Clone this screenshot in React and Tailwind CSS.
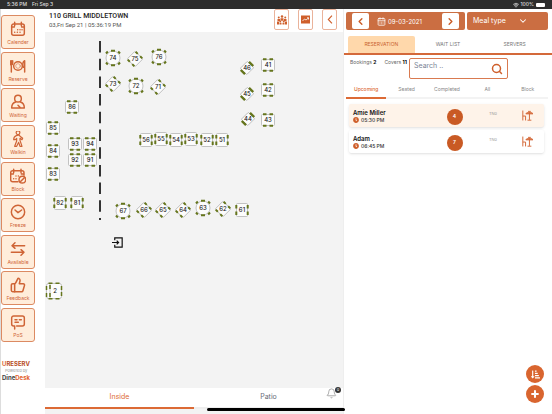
import React from 'react';
import { CalendarDays, ChevronDown, ChevronLeft, ChevronRight, Search, ThumbsUp, Wifi, Bell, Plus } from 'lucide-react';
import { FaClock, FaSortAmountDownAlt } from 'react-icons/fa';

const NAV = ['Calender', 'Reserve', 'Waiting', 'Walkin', 'Block', 'Freeze', 'Available', 'Feedback', 'PoS'];

// x / y are the centre of the table on the floor canvas
const TABLES = [
  { no: 74, shape: 'round', x: 68, y: 26 },
  { no: 75, shape: 'diamond', x: 90, y: 27 },
  { no: 76, shape: 'round', x: 114, y: 25 },
  { no: 73, shape: 'diamond', x: 68, y: 52 },
  { no: 72, shape: 'round', x: 91, y: 54 },
  { no: 71, shape: 'diamond', x: 113, y: 55 },
  { no: 46, shape: 'tilted', x: 202, y: 36 },
  { no: 45, shape: 'tilted', x: 202, y: 62 },
  { no: 44, shape: 'tilted', x: 203, y: 87 },
  { no: 41, shape: 'wide', x: 223, y: 33 },
  { no: 42, shape: 'wide', x: 223, y: 58 },
  { no: 43, shape: 'wide', x: 223, y: 88 },
  { no: 86, shape: 'wide', x: 27, y: 75 },
  { no: 85, shape: 'wide', x: 8, y: 96 },
  { no: 84, shape: 'wide', x: 8, y: 119 },
  { no: 83, shape: 'wide', x: 8, y: 142 },
  { no: 93, shape: 'wide', x: 30, y: 112 },
  { no: 94, shape: 'wide', x: 45, y: 112 },
  { no: 92, shape: 'wide', x: 30, y: 128 },
  { no: 91, shape: 'wide', x: 45, y: 128 },
  { no: 82, shape: 'tall', x: 15, y: 171 },
  { no: 81, shape: 'tall', x: 32, y: 171 },
  { no: 56, shape: 'tall', x: 101, y: 108 },
  { no: 55, shape: 'tall', x: 116, y: 107 },
  { no: 54, shape: 'tall', x: 131, y: 108 },
  { no: 53, shape: 'tall', x: 146, y: 107 },
  { no: 52, shape: 'tall', x: 162, y: 108 },
  { no: 51, shape: 'tall', x: 177, y: 108 },
  { no: 67, shape: 'round', x: 78, y: 179 },
  { no: 66, shape: 'diamond', x: 99, y: 178 },
  { no: 65, shape: 'diamond', x: 118, y: 178 },
  { no: 64, shape: 'diamond', x: 138, y: 178 },
  { no: 63, shape: 'round', x: 158, y: 176 },
  { no: 62, shape: 'diamond', x: 178, y: 177 },
  { no: 61, shape: 'tall', x: 197, y: 178 },
  { no: 2, shape: 'double', x: 9, y: 259 },
];

const BOOKINGS = [
  { name: 'Amie Miller', time: '05:30 PM', covers: 4, row: 'bg-[#fef3e9]' },
  { name: 'Adam .', time: '06:45 PM', covers: 7, row: 'bg-white' },
];

function NavIcon({ name }) {
  const base = {
    viewBox: '0 0 24 24',
    fill: 'none',
    stroke: 'currentColor',
    strokeWidth: 2.2,
    strokeLinecap: 'round',
    strokeLinejoin: 'round',
    className: 'h-4 w-4',
  };
  if (name === 'Feedback') return <ThumbsUp className="h-4 w-4" strokeWidth={2.3} />;
  return (
    <svg {...base}>
      {name === 'Calender' && (
        <>
          <rect x="2.5" y="4.5" width="19" height="17" rx="3" />
          <path d="M7 2v5M17 2v5M2.5 9h4M17.500 9h4" />
          <path d="M11.500 13h.1M15 13h.1M18 13h.1M7 17h.1M11 17h.1M15 17h.1" />
        </>
      )}
      {name === 'Reserve' && (
        <>
          <circle cx="12" cy="12" r="6.500" />
          <circle cx="12" cy="12" r="3.500" strokeWidth="0.800" />
          <path d="M0 4v4c0 3 4 3 4 0V4M2 4v17" />
          <path d="M22 21V4c-3 2-3 7-2 10h2" />
        </>
      )}
      {name === 'Waiting' && (
        <>
          <circle cx="12" cy="7" r="5" />
          <path d="M8.500 12c-4 1-6 4-6 9h19c0-5-2-8-6-9M12 17l4 4" />
        </>
      )}
      {name === 'Walkin' && (
        <g strokeWidth="1.800">
          <circle cx="12" cy="2.500" r="2.800" />
          <path d="M9.500 7c-3 1-4 3-4 6h2.500l2-2v4l-3 8h3l3-6 2 6h3l-3-9v-3l3 2 1-2-4-3-1-2z" />
        </g>
      )}
      {name === 'Block' && (
        <>
          <path d="M12 20.500H4a3 3 0 0 1-3-3V7a3 3 0 0 1 3-3h14a3 3 0 0 1 3 3v4M5.500 2v5M16.500 2v5M1 9h4M17 9h4" />
          <path d="M9 12v.1M12.500 12v.1M5.500 16v.1M9 16v.1" />
          <circle cx="18.500" cy="17.500" r="5" />
          <path d="m15.500 20.500 6-6" />
        </>
      )}
      {name === 'Freeze' && (
        <>
          <circle cx="12" cy="12" r="10" />
          <path d="m7.500 9 4.500 4 5.500-4" />
        </>
      )}
      {name === 'Available' && <path d="M22 7H3l4.500-4.500M3 7l4.500 4M2 17h19l-4.500-4M21 17l-4.500 4.500" />}
      {name === 'PoS' && (
        <path d="M10 18h8.500a3 3 0 0 0 3-3V6a3 3 0 0 0-3-3h-13a3 3 0 0 0-3 3v9a3 3 0 0 0 3 3h1.500v4.500M7.500 8.500h3M14 8.500h3M7.500 12.500h5" />
      )}
    </svg>
  );
}

function TableShape({ shape }) {
  const seat = { stroke: '#65751c', strokeWidth: 2, fill: 'none' };
  const body = { fill: '#fcfcfc', stroke: '#aaa', strokeWidth: 0.7 };
  return (
    <svg viewBox="-9 -9 18 18" className="h-full w-full">
      {shape === 'wide' && (
        <>
          <rect x="-6.500" y="-5.500" width="13" height="11" rx="1" {...body} />
          <path d="M-5-5.700h3.500M1.500-5.700H5M-5 5.700h3.500M1.500 5.700H5" {...seat} />
        </>
      )}
      {shape === 'tall' && (
        <>
          <rect x="-5.500" y="-6.500" width="11" height="13" rx="1" {...body} />
          <path d="M-5.700-5v3.500M-5.700 1.500V5M5.700-5v3.500M5.700 1.500V5" {...seat} />
        </>
      )}
      {shape === 'round' && (
        <>
          <circle r="7" {...body} />
          <path d="M-2-7.300h4M-2 7.300h4M-7-4.500l1.800-2M7-4.500l-1.800-2M-7 4.500l1.800 2M7 4.500l-1.800 2" {...seat} />
        </>
      )}
      {shape === 'diamond' && (
        <g transform="rotate(45)">
          <rect x="-5.500" y="-5.500" width="11" height="11" rx="1" {...body} />
          <path d="M-4.700-5.600h3M1.700-5.600h3M-4.700 5.600h3M1.700 5.600h3" {...seat} />
        </g>
      )}
      {shape === 'tilted' && (
        <g transform="rotate(45)">
          <rect x="-4.500" y="-5" width="9" height="10" rx="1" {...body} />
          <path d="M-3-5.800h6M-3 5.800h6" {...seat} strokeWidth="2.400" />
        </g>
      )}
      {shape === 'double' && (
        <>
          <rect x="-7.500" y="-7.500" width="15" height="15" rx="2" {...body} />
          <path d="M-4-7v14" stroke="#aaa" strokeWidth="0.7" />
          <path d="M-7.500-5v4M-7.500 2v4M-4-6v4M-4 2v4M7.500-5v4M7.500 1v4M-5.500-7.800h4M1.500-7.800h4M-5.500 7.800h4M1.500 7.800h4" {...seat} strokeWidth="1.500" />
        </>
      )}
    </svg>
  );
}

function FloorTable({ no, shape, x, y }) {
  return (
    <div
      className="absolute flex h-[18px] w-[18px] -translate-x-1/2 -translate-y-1/2 items-center justify-center"
      style={{ left: x, top: y }}
    >
      <div className="absolute inset-0">
        <TableShape shape={shape} />
      </div>
      <span className={`relative text-[6px] leading-none font-medium text-[#222] ${shape === 'double' ? 'pl-[2px]' : ''}`}>{no}</span>
    </div>
  );
}

function Sidebar() {
  return (
    <aside className="flex flex-col border-l border-[#ddd] bg-white pt-[6px]">
      <nav className="flex h-[327px] w-[34px] flex-col justify-between">
        {NAV.map((name) => (
          <button
            key={name}
            className="flex h-[34px] flex-col items-center justify-end gap-[2px] rounded-[3px] border border-[#dc8a62] bg-[#ffeddb] pb-[3px] text-[#cf6436]"
          >
            <NavIcon name={name} />
            <span className="text-[5px] leading-[6px]">{name}</span>
          </button>
        ))}
      </nav>
      <div className="mt-[18px] pl-[1px]">
        <p className="text-[6px] leading-[8px] font-bold text-[#b84d24]">
          <span className="text-[#dc6a38]">U</span>RESERV
        </p>
        <p className="pl-[3px] text-[4px] leading-[6px] text-[#999]">Powered by</p>
        <p className="text-[6px] leading-[8px] font-bold text-[#444]">
          Dine<span className="text-[#e2622f]">Desk</span>
        </p>
      </div>
    </aside>
  );
}

function FloorPlan() {
  return (
    <main className="flex min-w-0 flex-col bg-[#f3f3f3]">
      <header className="flex h-[23px] items-start justify-between bg-white pl-1 pr-[6px]">
        <div className="pt-[3px] font-['Roboto',sans-serif]">
          <h1 className="text-[7px] leading-[9px] font-medium text-[#222]">110 GRILL MIDDLETOWN</h1>
          <p className="text-[6px] leading-[7px] text-[#555]">03,Fri Sep 21 | 05:36:19 PM</p>
        </div>
        <div className="flex gap-[9px] text-[#cf5f2b]">
          <button aria-label="Guests" className="flex h-[21px] w-[15px] items-center justify-center rounded-[2px] border border-[#eab39b]">
            <svg viewBox="0 0 20 20" className="h-[10px] w-[10px]" fill="currentColor">
              <circle cx="10" cy="3" r="2.500" />
              <circle cx="3.500" cy="5" r="2" />
              <circle cx="16.500" cy="5" r="2" />
              <path d="M7 6.500h6v5H7zM1 8h5v4H1zM14 8h5v4h-5z" />
              <circle cx="6.500" cy="13" r="2" />
              <circle cx="13.500" cy="13" r="2" />
              <path d="M0 13h4v6H0zM5 15.500h4V19H5zM11 15.500h4V19h-4zM16 13h4v6h-4z" />
            </svg>
          </button>
          <button aria-label="Statistics" className="flex h-[21px] w-[15px] items-center justify-center rounded-[2px] border border-[#eab39b]">
            <svg viewBox="0 0 18 18" className="h-[9px] w-[9px]">
              <rect y="1" width="18" height="16" fill="currentColor" />
              <path d="m3 12 4-4 3 2 5-4M12 5.500h3V9" fill="none" stroke="#fff" strokeWidth="1.600" />
            </svg>
          </button>
          <button aria-label="Back" className="flex h-[21px] w-[15px] items-center justify-center rounded-[2px] border border-[#eab39b]">
            <svg viewBox="0 0 10 16" className="h-[9px] w-[6px]" fill="none" stroke="currentColor" strokeWidth="2">
              <path d="M8.500 1 2 8l6.500 7" />
            </svg>
          </button>
        </div>
      </header>

      <section className="relative flex-1">
        <svg viewBox="0 0 4 180" className="absolute top-[9px] left-[53px] h-[180px] w-[4px]">
          <path d="M2 0v179" stroke="#333" strokeWidth="2" strokeDasharray="11.500 6.200" />
        </svg>
        {TABLES.map((table) => (
          <FloorTable key={table.no} {...table} />
        ))}
        {/* entrance */}
        <svg viewBox="0 0 20 20" className="absolute top-[205px] left-[67px] h-[11px] w-[11px]" fill="none" stroke="#111" strokeWidth="2.200">
          <path d="M5 6V1.500h13.500v17H5V14M0 10h12M8.500 6.500 12 10l-3.500 3.500" />
        </svg>
      </section>

      <footer className="relative mb-[5px] grid h-[21px] grid-cols-2 bg-white">
        <button className="border-b-2 border-[#dc6a35] text-[7px] text-[#dc6a35]">Inside</button>
        <button className="border-b-2 border-[#eee] text-[7px] text-[#666b76]">Patio</button>
        <button aria-label="Notifications" className="absolute top-0 right-[6px] text-[#888]">
          <Bell className="h-[11px] w-[11px]" strokeWidth={1.5} />
          <span className="absolute -top-[1px] -right-[4px] flex h-[6px] w-[6px] items-center justify-center rounded-full bg-[#333] text-[4px] leading-none text-white">
            0
          </span>
        </button>
      </footer>
    </main>
  );
}

function BookingCard({ name, time, covers, row }) {
  return (
    <li className={`grid h-[23px] grid-cols-[84fr_43fr_34fr_34fr] items-center rounded-[2px] shadow ${row}`}>
      <div className="pl-1">
        <h3 className="text-[6px] leading-[9px] font-semibold text-[#111]">{name}</h3>
        <p className="flex items-center gap-[2px] text-[5px] leading-[7px] font-medium text-[#333]">
          <FaClock className="h-[6px] w-[6px] text-[#cf5f2b]" />
          {time}
        </p>
      </div>
      <span className="mt-[3px] flex h-4 w-4 items-center justify-center justify-self-center rounded-full bg-[#c95a24] text-[5px] font-semibold text-white">
        {covers}
      </span>
      <span className="pb-1 text-center text-[4px] text-[#999]">TNo</span>
      <svg viewBox="0 0 20 20" className="h-[11px] w-[11px] justify-self-center" fill="none" stroke="#d56a3b" strokeWidth="1.800">
        <path d="M1.500 1v18M1.500 11h5V19M13.500 4v14M10 18.500h7" />
        <path d="M7 7c0-3 13-3 13 0zM11 2.500h5" fill="#d56a3b" />
      </svg>
    </li>
  );
}

function BookingPanel() {
  return (
    <section className="min-w-0 border-l border-[#eee] bg-white">
      <div className="grid grid-cols-[119fr_81fr] gap-[2px] pt-[3px] pr-1 pl-[2px]">
        <div className="flex h-[18px] min-w-0 items-center justify-between rounded-[2px] bg-[#cb6e42] px-[6px] text-white">
          <button aria-label="Previous day" className="flex h-4 w-[17px] items-center justify-center rounded-[2px] bg-white text-[#c95a24]">
            <ChevronLeft className="h-[11px] w-[11px]" strokeWidth={3} />
          </button>
          <button className="flex items-center gap-[2px] pr-3 text-[6px]">
            <CalendarDays className="h-[9px] w-[9px]" />
            09-03-2021
          </button>
          <button aria-label="Next day" className="flex h-4 w-[17px] items-center justify-center rounded-[2px] bg-white text-[#c95a24]">
            <ChevronRight className="h-[11px] w-[11px]" strokeWidth={3} />
          </button>
        </div>
        <div className="relative flex h-[18px] min-w-0 items-center rounded-[2px] bg-[#cb6e42] text-white">
          <select aria-label="Meal type" className="w-full appearance-none bg-transparent pl-[6px] text-[7px] outline-none">
            <option>Meal type</option>
          </select>
          <ChevronDown className="pointer-events-none absolute right-5 h-[10px] w-[10px]" strokeWidth={2.5} />
        </div>
      </div>

      <div className="mt-[6px] grid h-[19px] grid-cols-3 border-b-2 border-[#d4693a] px-1 text-[5px] text-[#777]">
        <button className="rounded-t-[2px] bg-[#ffd8ab] text-[#c9622f]">RESERVATION</button>
        <button>WAIT LIST</button>
        <button>SERVERS</button>
      </div>

      <div className="flex items-start justify-between pt-[3px] pr-11 pl-[6px]">
        <p className="flex gap-[8px] pt-[1px] text-[5px] leading-[6px] text-[#666]">
          <span>Bookings <b className="text-black">2</b></span>
          <span>Covers <b className="text-black">11</b></span>
        </p>
        <label className="flex h-[21px] w-[99px] items-center rounded-[2px] border border-[#d97a50] pr-1">
          <input
            type="text"
            aria-label="Search"
            placeholder="Search .."
            className="min-w-0 flex-1 pb-[6px] pl-1 text-[7px] leading-[9px] outline-none placeholder:text-[#7b8496]"
          />
          <Search className="h-3 w-3 text-[#cf5f2b]" strokeWidth={3} />
        </label>
      </div>

      <div className="mt-1 mr-1 ml-[2px] grid h-4 grid-cols-5 text-[5px] text-[#888]">
        <button className="border-b-2 border-[#dc6a35] font-medium text-[#dc6a35]">Upcoming</button>
        <button className="border-b-2 border-[#f3f3f3]">Seated</button>
        <button className="border-b-2 border-[#f3f3f3]">Completed</button>
        <button className="border-b-2 border-[#f3f3f3]">All</button>
        <button className="border-b-2 border-[#f3f3f3]">Block</button>
      </div>

      <ul className="mt-[5px] flex flex-col gap-[3px] pr-2 pl-[5px]">
        {BOOKINGS.map((booking) => (
          <BookingCard key={booking.name} {...booking} />
        ))}
      </ul>
    </section>
  );
}

export default function App() {
  return (
    <div className="flex min-h-screen flex-col bg-white font-['Inter',sans-serif]">
      <div className="flex h-[9px] items-center justify-between bg-[#2d2d2d] px-[7px] text-[5px] leading-none font-medium text-[#ddd]">
        <div className="flex gap-[5px]">
          <span>5:36 PM</span>
          <span>Fri Sep 3</span>
        </div>
        <div className="flex items-center gap-[2px]">
          <Wifi className="h-[6px] w-[6px]" strokeWidth={3} />
          <span>100%</span>
          <span className="h-1 w-[9px] rounded-[1px] bg-white" />
        </div>
      </div>

      <div className="grid flex-1 grid-cols-[45px_minmax(0,298fr)_minmax(0,209fr)]">
        <Sidebar />
        <FloorPlan />
        <BookingPanel />
      </div>

      <div className="fixed right-2 bottom-[11px] flex flex-col gap-[2px]">
        <button aria-label="Sort" className="flex h-[18px] w-[18px] items-center justify-center rounded-full bg-[#d9652f] text-white">
          <FaSortAmountDownAlt className="h-[9px] w-[9px]" />
        </button>
        <button aria-label="Add booking" className="flex h-[18px] w-[18px] items-center justify-center rounded-full bg-[#d9652f] text-white">
          <Plus className="h-[10px] w-[10px]" strokeWidth={5} />
        </button>
      </div>
      <div className="fixed bottom-[3px] left-1/2 h-[3px] w-1/4 -translate-x-1/2 rounded-full bg-black" />
    </div>
  );
}
